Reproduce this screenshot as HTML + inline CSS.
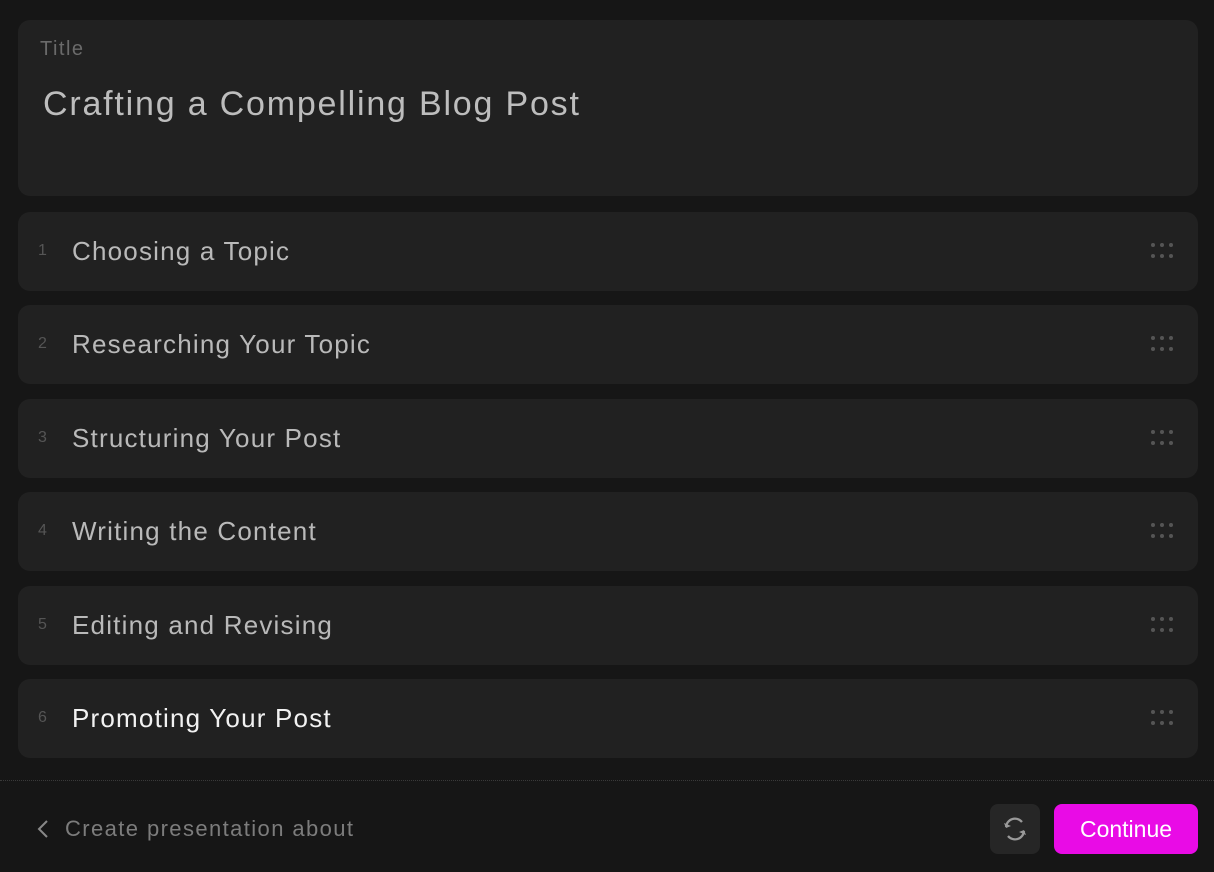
<!DOCTYPE html>
<html><head><style>
body{margin:0;width:1214px;height:872px;background:#161616;font-family:"Liberation Sans",sans-serif;position:relative;overflow:hidden}
.card{position:absolute;left:18px;width:1180px;background:#212121;border-radius:12px}
.t{top:20px;height:176px}
.lbl{position:absolute;left:22px;top:18px;font-size:20px;color:#6a6a6a;letter-spacing:1.5px}
.ttl{position:absolute;left:25px;top:65px;font-size:34px;color:#bdbdbd;letter-spacing:1.8px}
.row{height:79px}
.n{position:absolute;left:20px;top:30px;font-size:16px;color:#555}
.rt{position:absolute;left:54px;top:24px;font-size:26px;color:#b9b9b9;letter-spacing:1.2px}
.d{position:absolute;right:24px;top:30px}
.div{position:absolute;left:0;right:0;top:780px;border-top:1px dotted #3a3a3a}
</style></head><body>
<div class="card t"><div class="lbl">Title</div><div class="ttl">Crafting a Compelling Blog Post</div></div>
<div class="card row" style="top:212px"><div class="n">1</div><div class="rt">Choosing a Topic</div><svg class="d" width="24" height="18"><g fill="#555"><circle cx="3" cy="3" r="2"/><circle cx="12" cy="3" r="2"/><circle cx="21" cy="3" r="2"/><circle cx="3" cy="14" r="2"/><circle cx="12" cy="14" r="2"/><circle cx="21" cy="14" r="2"/></g></svg></div>
<div class="card row" style="top:305px"><div class="n">2</div><div class="rt">Researching Your Topic</div><svg class="d" width="24" height="18"><g fill="#555"><circle cx="3" cy="3" r="2"/><circle cx="12" cy="3" r="2"/><circle cx="21" cy="3" r="2"/><circle cx="3" cy="14" r="2"/><circle cx="12" cy="14" r="2"/><circle cx="21" cy="14" r="2"/></g></svg></div>
<div class="card row" style="top:399px"><div class="n">3</div><div class="rt">Structuring Your Post</div><svg class="d" width="24" height="18"><g fill="#555"><circle cx="3" cy="3" r="2"/><circle cx="12" cy="3" r="2"/><circle cx="21" cy="3" r="2"/><circle cx="3" cy="14" r="2"/><circle cx="12" cy="14" r="2"/><circle cx="21" cy="14" r="2"/></g></svg></div>
<div class="card row" style="top:492px"><div class="n">4</div><div class="rt">Writing the Content</div><svg class="d" width="24" height="18"><g fill="#555"><circle cx="3" cy="3" r="2"/><circle cx="12" cy="3" r="2"/><circle cx="21" cy="3" r="2"/><circle cx="3" cy="14" r="2"/><circle cx="12" cy="14" r="2"/><circle cx="21" cy="14" r="2"/></g></svg></div>
<div class="card row" style="top:586px"><div class="n">5</div><div class="rt">Editing and Revising</div><svg class="d" width="24" height="18"><g fill="#555"><circle cx="3" cy="3" r="2"/><circle cx="12" cy="3" r="2"/><circle cx="21" cy="3" r="2"/><circle cx="3" cy="14" r="2"/><circle cx="12" cy="14" r="2"/><circle cx="21" cy="14" r="2"/></g></svg></div>
<div class="card row" style="top:679px"><div class="n">6</div><div class="rt" style="color:#f2f2f2">Promoting Your Post</div><svg class="d" width="24" height="18"><g fill="#555"><circle cx="3" cy="3" r="2"/><circle cx="12" cy="3" r="2"/><circle cx="21" cy="3" r="2"/><circle cx="3" cy="14" r="2"/><circle cx="12" cy="14" r="2"/><circle cx="21" cy="14" r="2"/></g></svg></div>
<div class="div"></div>
<svg style="position:absolute;left:36px;top:819px" width="14" height="20" viewBox="0 0 14 20"><path d="M11 2L3 10l8 8" stroke="#888" stroke-width="2" fill="none"/></svg>
<div style="position:absolute;left:65px;top:816px;font-size:22px;color:#7c7c7c;letter-spacing:1.4px">Create presentation about</div>
<div style="position:absolute;left:990px;top:804px;width:50px;height:50px;border-radius:8px;background:#262626"></div>
<svg style="position:absolute;left:1000px;top:814px" width="30" height="30" viewBox="0 0 30 30"><path d="M6 13a9 9 0 0 1 16-5" stroke="#999" stroke-width="2.2" fill="none"/><path d="M24 17a9 9 0 0 1-16 5" stroke="#999" stroke-width="2.2" fill="none"/><path d="M4 9l2 5 5-2z" fill="#999"/><path d="M26 21l-2-5-5 2z" fill="#999"/></svg>
<div style="position:absolute;left:1054px;top:804px;width:144px;height:50px;border-radius:8px;background:#e90be6;color:#fff;font-size:23px;text-align:center;line-height:50px">Continue</div>
</body></html>
